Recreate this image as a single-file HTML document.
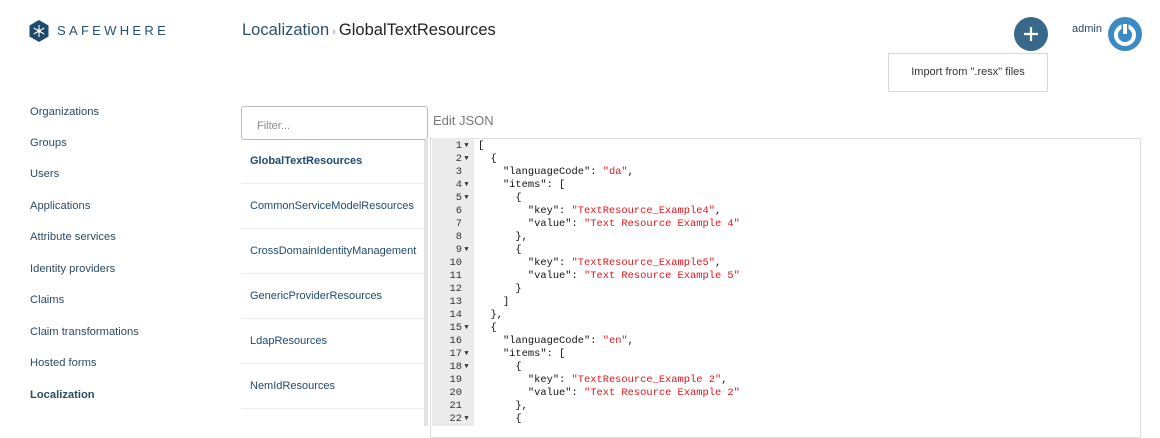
<!DOCTYPE html>
<html><head><meta charset="utf-8"><style>
*{margin:0;padding:0;box-sizing:border-box}
body{width:1160px;height:426px;overflow:hidden;background:#fff;font-family:"Liberation Sans",sans-serif;position:relative;color:#2c4a63}
.a{position:absolute;white-space:nowrap}
.nav{left:30px;font-size:11.2px;color:#2c4a63}
.li{position:absolute;left:241px;width:184px;height:45px;border-bottom:1px solid #ececec;font-size:11px;color:#1f4a6e;padding-left:9px;line-height:45px}
.code{position:absolute;left:478px;font-family:"Liberation Mono",monospace;font-size:10.4px;color:#111;white-space:pre;line-height:13px;top:140px}
.gut{position:absolute;left:432px;width:42px;top:138px;height:288px;background:#ebebeb;font-family:"Liberation Mono",monospace;font-size:10.4px;line-height:13px;color:#333;padding-top:2px}
.gut div{text-align:right;padding-right:3px;height:13px;position:relative}
.gut i{font-style:normal;font-size:7px;display:inline-block;width:9px;text-align:center;vertical-align:1px}
.s{color:#e0161b}
</style></head><body>
<svg class="a" style="left:28px;top:19px" width="22" height="24" viewBox="0 0 22 24"><polygon points="11,1 20.5,6.5 20.5,17.5 11,23 1.5,17.5 1.5,6.5" fill="#1f4a6b"/><g stroke="#fff" stroke-width="1.1"><line x1="11" y1="6" x2="11" y2="18"/><line x1="5.8" y1="9" x2="16.2" y2="15"/><line x1="5.8" y1="15" x2="16.2" y2="9"/></g><circle cx="11" cy="12" r="1.8" fill="#fff"/></svg>
<div class="a" style="left:57px;top:23px;font-size:13px;letter-spacing:3.3px;color:#27506f">SAFEWHERE</div>
<div class="a" style="left:242px;top:21px;font-size:16.5px"><span style="color:#2c4f6e">Localization</span><span style="color:#999;font-size:11px"> › </span><span style="color:#222">GlobalTextResources</span></div>
<div class="a" style="left:1014px;top:17px;width:34px;height:34px;border-radius:50%;background:#38698b"></div>
<svg class="a" style="left:1022px;top:25px" width="18" height="18" viewBox="0 0 18 18"><path d="M9 2v14M2 9h14" stroke="#fff" stroke-width="2.2"/></svg>
<div class="a" style="left:888px;top:53px;width:160px;height:39px;border:1px solid #d8d8d8;font-size:11px;color:#333;line-height:37px;text-align:center;background:#fff">Import from ".resx" files</div>
<div class="a" style="left:1072px;top:23px;font-size:11px;color:#2c4a63">admin</div>
<svg class="a" style="left:1107px;top:16px" width="36" height="36" viewBox="0 0 36 36"><circle cx="18" cy="18" r="17" fill="#3c8ac4"/><circle cx="18" cy="19" r="9" fill="none" stroke="#fff" stroke-width="4"/><line x1="18" y1="7" x2="18" y2="19" stroke="#3c8ac4" stroke-width="7"/><line x1="18" y1="8" x2="18" y2="18" stroke="#fff" stroke-width="4"/></svg>
<div class="a nav" style="top:106px">Organizations</div>
<div class="a nav" style="top:137px">Groups</div>
<div class="a nav" style="top:168px">Users</div>
<div class="a nav" style="top:200px">Applications</div>
<div class="a nav" style="top:231px">Attribute services</div>
<div class="a nav" style="top:263px">Identity providers</div>
<div class="a nav" style="top:294px">Claims</div>
<div class="a nav" style="top:326px">Claim transformations</div>
<div class="a nav" style="top:357px">Hosted forms</div>
<div class="a nav" style="top:389px;font-weight:bold">Localization</div>
<div class="a" style="left:241px;top:106px;width:187px;height:34px;border:1px solid #bbb;border-radius:3px;font-size:11px;color:#888;padding:13px 0 0 15px">Filter...</div>
<div class="a" style="left:424px;top:140px;width:4px;height:286px;background:#e3e3e3"></div>
<div class="li" style="top:139px;font-weight:bold">GlobalTextResources</div>
<div class="li" style="top:184px">CommonServiceModelResources</div>
<div class="li" style="top:229px">CrossDomainIdentityManagement</div>
<div class="li" style="top:274px">GenericProviderResources</div>
<div class="li" style="top:319px">LdapResources</div>
<div class="li" style="top:364px">NemIdResources</div>
<div class="a" style="left:433px;top:113px;font-size:13px;color:#777">Edit JSON</div>
<div class="a" style="left:430px;top:138px;width:711px;height:300px;border:1px solid #ddd"></div>
<div class="gut">
<div>1<i>▼</i></div><div>2<i>▼</i></div><div>3<i></i></div><div>4<i>▼</i></div><div>5<i>▼</i></div><div>6<i></i></div><div>7<i></i></div><div>8<i></i></div><div>9<i>▼</i></div><div>10<i></i></div><div>11<i></i></div><div>12<i></i></div><div>13<i></i></div><div>14<i></i></div><div>15<i>▼</i></div><div>16<i></i></div><div>17<i>▼</i></div><div>18<i>▼</i></div><div>19<i></i></div><div>20<i></i></div><div>21<i></i></div><div>22<i>▼</i></div>
</div>
<div class="code">[
  {
    "languageCode": <span class="s">"da"</span>,
    "items": [
      {
        "key": <span class="s">"TextResource_Example4"</span>,
        "value": <span class="s">"Text Resource Example 4"</span>
      },
      {
        "key": <span class="s">"TextResource_Example5"</span>,
        "value": <span class="s">"Text Resource Example 5"</span>
      }
    ]
  },
  {
    "languageCode": <span class="s">"en"</span>,
    "items": [
      {
        "key": <span class="s">"TextResource_Example 2"</span>,
        "value": <span class="s">"Text Resource Example 2"</span>
      },
      {</div>
</body></html>
